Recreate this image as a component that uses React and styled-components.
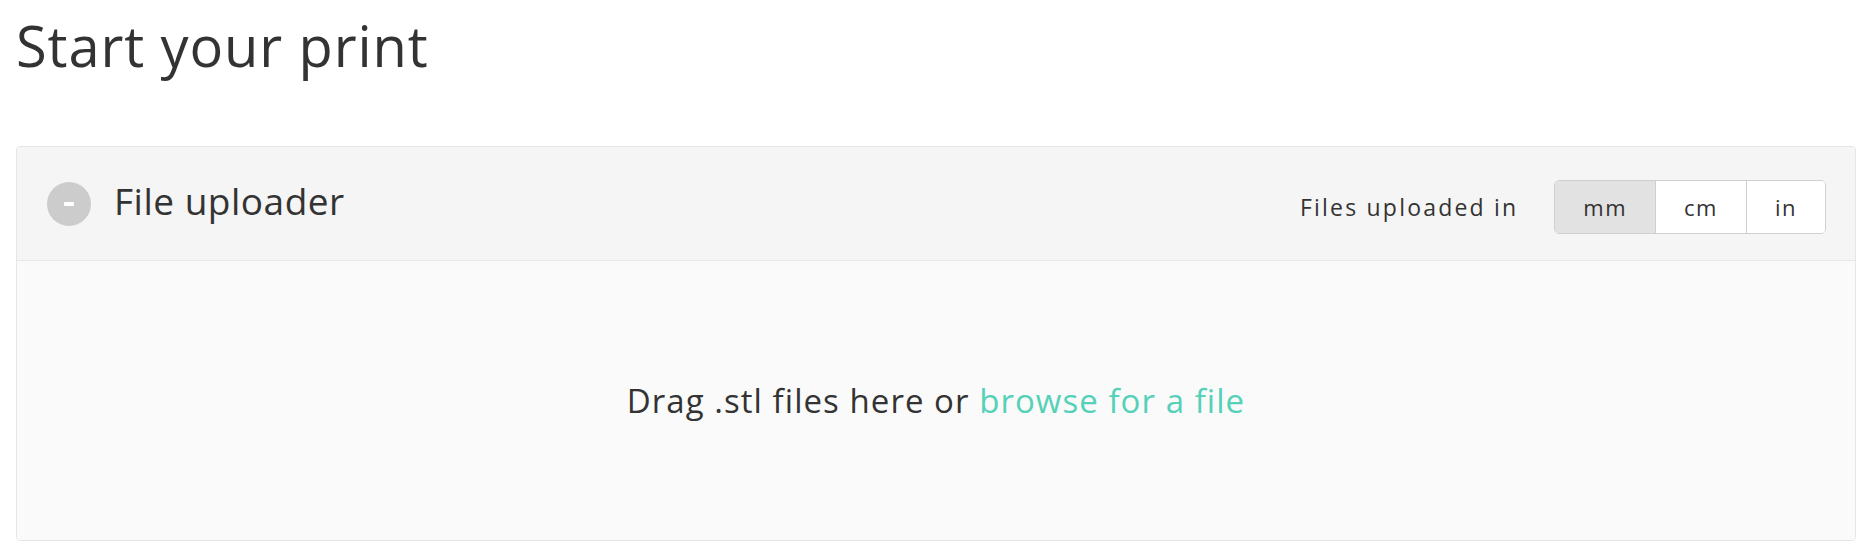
import React, { useState } from 'react';
import styled, { createGlobalStyle } from 'styled-components';

const GlobalStyle = createGlobalStyle`
  body {
    margin: 0;
    background: #ffffff;
    font-family: 'Open Sans', 'Lato', sans-serif;
    color: #333333;
  }
`;

const Page = styled.div`
  padding: 12px 18px 13px 16px;
`;

const Title = styled.h1`
  margin: 0 0 67px 0;
  font-size: 56px;
  font-weight: 400;
  line-height: 1.2;
  letter-spacing: 0.9px;
  color: #333333;
`;

const Card = styled.section`
  border: 1px solid #e6e6e6;
  border-radius: 4px;
  overflow: hidden;
`;

const Header = styled.div`
  height: 113px;
  display: flex;
  align-items: center;
  justify-content: space-between;
  padding: 0 29px 0 30px;
  background: #f5f5f5;
  border-bottom: 1px solid #e8e8e8;
`;

const HeaderLeft = styled.div`
  display: flex;
  align-items: center;
  gap: 23px;
`;

const Toggle = styled.button`
  width: 44px;
  height: 44px;
  border: none;
  border-radius: 50%;
  background: #cccccc;
  display: flex;
  align-items: center;
  justify-content: center;
  padding: 0;
  cursor: pointer;

  span {
    display: block;
    width: 10px;
    height: 4px;
    background: #ffffff;
    border-radius: 1px;
  }
`;

const HeaderTitle = styled.h2`
  margin: 0 0 4px 0;
  font-size: 37px;
  font-weight: 400;
  line-height: 1.2;
  letter-spacing: 0.5px;
  color: #333333;
`;

const Units = styled.div`
  display: flex;
  align-items: center;
  gap: 36px;
  padding-top: 6px;
`;

const UnitsLabel = styled.span`
  font-size: 23px;
  letter-spacing: 2.2px;
  color: #333333;
`;

const Segmented = styled.div`
  display: flex;
  height: 52px;
  border: 1px solid #cfcfcf;
  border-radius: 5px;
  overflow: hidden;
  background: #ffffff;
`;

const Segment = styled.button`
  border: none;
  border-left: ${(p) => (p.$first ? 'none' : '1px solid #cfcfcf')};
  background: ${(p) => (p.$active ? '#e2e2e2' : '#ffffff')};
  padding: 0 28px;
  font-family: 'Open Sans', 'Lato', sans-serif;
  font-size: 22px;
  letter-spacing: 1.5px;
  color: #333333;
  cursor: pointer;
`;

const DropZone = styled.div`
  height: 279px;
  background: #fafafa;
  display: flex;
  align-items: center;
  justify-content: center;
  font-size: 33px;
  letter-spacing: 1.05px;
  color: #333333;
`;

const Browse = styled.a`
  color: #55d1b8;
  text-decoration: none;
  cursor: pointer;
`;

export default function App() {
  const [unit, setUnit] = useState('mm');
  const units = ['mm', 'cm', 'in'];

  return (
    <Page>
      <GlobalStyle />
      <Title>Start your print</Title>
      <Card>
        <Header>
          <HeaderLeft>
            <Toggle aria-label="Collapse">
              <span />
            </Toggle>
            <HeaderTitle>File uploader</HeaderTitle>
          </HeaderLeft>
          <Units>
            <UnitsLabel>Files uploaded in</UnitsLabel>
            <Segmented>
              {units.map((u, i) => (
                <Segment key={u} $first={i === 0} $active={unit === u} onClick={() => setUnit(u)}>
                  {u}
                </Segment>
              ))}
            </Segmented>
          </Units>
        </Header>
        <DropZone>
          <span>
            Drag .stl files here or <Browse>browse for a file</Browse>
          </span>
        </DropZone>
      </Card>
    </Page>
  );
}
